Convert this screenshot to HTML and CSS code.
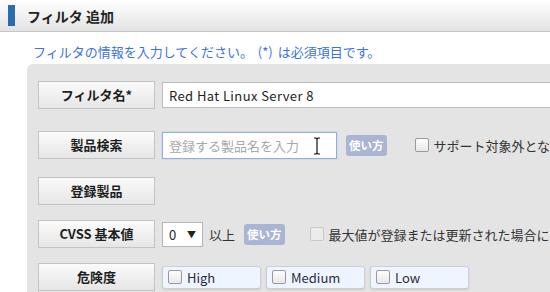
FILE: index.html
```html
<!DOCTYPE html>
<html lang="ja">
<head>
    <meta charset="UTF-8">
    <title>フィルタ 追加</title>
    <link rel="stylesheet" href="styles.css">
</head>
<body>
    <header class="page-header">
        <span class="header-mark"></span>
        <h1>フィルタ 追加</h1>
    </header>

    <p class="intro">フィルタの情報を入力してください。 (*) は必須項目です。</p>

    <div class="form-panel">
        <div class="form-row row-name">
            <div class="field-label">フィルタ名*</div>
            <input class="text-input name-input" type="text" value="Red Hat Linux Server 8">
        </div>

        <div class="form-row row-search">
            <div class="field-label">製品検索</div>
            <div class="search-box">
                <input class="text-input search-input" type="text" placeholder="登録する製品名を入力">
                <svg class="ibeam" width="8" height="18" viewBox="0 0 8 18">
                    <path d="M1 1h2l1 1 1-1h2M4 2v14M1 17h2l1-1 1 1h2" fill="none" stroke="#111" stroke-width="1.2"/>
                </svg>
            </div>
            <span class="help-btn">使い方</span>
            <label class="check-opt">
                <span class="check-box"></span>
                サポート対象外となった製品も表示
            </label>
        </div>

        <div class="form-row row-registered">
            <div class="field-label">登録製品</div>
        </div>

        <div class="form-row row-cvss">
            <div class="field-label">CVSS 基本値</div>
            <div class="select-box">
                <span>0</span>
                <span class="select-arrow">▼</span>
            </div>
            <span class="unit">以上</span>
            <span class="help-btn">使い方</span>
            <label class="check-opt cvss-check">
                <span class="check-box disabled"></span>
                最大値が登録または更新された場合にのみ通知
            </label>
        </div>

        <div class="form-row row-risk">
            <div class="field-label">危険度</div>
            <div class="risk-options">
                <label class="risk-item"><span class="check-box"></span>High</label>
                <label class="risk-item"><span class="check-box"></span>Medium</label>
                <label class="risk-item"><span class="check-box"></span>Low</label>
            </div>
        </div>
    </div>
</body>
</html>
```

FILE: styles.css
```css
:root {
    --accent-blue: #2a6cb0;
    --link-blue: #3b73e0;
    --panel-gray: #e4e4e4;
    --border-gray: #c4c4c4;
    --text-dark: #1e1e1e;
}

body {
    margin: 0;
    font-family: "Noto Sans CJK JP", "Noto Sans", sans-serif;
    font-size: 13px;
    color: var(--text-dark);
    background: #fff;
    overflow: hidden;
}

.page-header {
    height: 31px;
    display: flex;
    align-items: center;
    background: linear-gradient(#ffffff, #e3e3e3);
    border-bottom: 1px solid #c6c6c6;
}

.header-mark {
    width: 7px;
    height: 21px;
    margin-left: 8px;
    background: var(--accent-blue);
}

.page-header h1 {
    margin: 0 0 0 12px;
    font-size: 14px;
    font-weight: bold;
    color: #222;
}

.intro {
    margin: 11px 0 0 33px;
    line-height: 18px;
    font-size: 13px;
    color: var(--link-blue);
    word-spacing: 2px;
}

.form-panel {
    box-sizing: border-box;
    margin: 3px 0 0 27px;
    height: 228px;
    padding: 17px 0 0 11px;
    background: var(--panel-gray);
    border-radius: 6px 0 0 0;
    overflow: hidden;
}

.form-row {
    display: flex;
    align-items: center;
    white-space: nowrap;
}

.form-row > * {
    flex: none;
}

.row-name { margin-bottom: 22px; }
.row-search { margin-bottom: 18px; }
.row-registered { margin-bottom: 15px; }
.row-cvss { margin-bottom: 15px; }

.field-label {
    width: 115px;
    height: 26px;
    line-height: 26px;
    margin-right: 7px;
    text-align: center;
    font-weight: bold;
    font-size: 13px;
    background: linear-gradient(#fbfbfb, #e6e6e6);
    border: 1px solid var(--border-gray);
}

.text-input {
    box-sizing: border-box;
    height: 26px;
    padding: 0 6px;
    font-family: inherit;
    font-size: 13px;
    color: var(--text-dark);
    border: 1px solid #bdbdbd;
    background: #fff;
    outline: none;
}

.name-input {
    width: 420px;
    letter-spacing: 0.4px;
}

.search-box {
    position: relative;
}

.search-input {
    width: 175px;
    height: 27px;
    border: 1px solid #8daee6;
    box-shadow: 0 0 1px #8daee6;
}

.search-input::placeholder {
    color: #a8a8a8;
}

.ibeam {
    position: absolute;
    left: 151px;
    top: 5px;
}

.help-btn {
    margin-left: 9px;
    padding: 0 3px;
    height: 21px;
    line-height: 21px;
    font-size: 11.5px;
    font-weight: bold;
    color: #fff;
    background: #a9b5d3;
    border-radius: 3px;
}

.check-opt {
    display: flex;
    align-items: center;
    margin-left: 28px;
    color: #333;
}

.cvss-check {
    margin-left: 25px;
}

.check-box {
    flex: none;
    width: 12px;
    height: 12px;
    margin-right: 5px;
    border: 1px solid #9a9a9a;
    border-radius: 2px;
    background: linear-gradient(#fdfdfd, #e8e8e8);
}

.check-box.disabled {
    border-color: #c8c8c8;
    background: #ececec;
}

.select-box {
    box-sizing: border-box;
    width: 41px;
    height: 25px;
    display: flex;
    align-items: center;
    justify-content: space-between;
    padding: 0 6px;
    background: #fff;
    border: 1px solid #b5b5b5;
}

.select-arrow {
    font-size: 9px;
    color: #222;
}

.unit {
    margin-left: 6px;
    color: #333;
}

.risk-options {
    display: flex;
    gap: 5px;
}

.risk-item {
    box-sizing: border-box;
    width: 99px;
    height: 23px;
    display: flex;
    align-items: center;
    padding-left: 5px;
    background: #eef5fe;
    border: 1px solid #c9d0da;
    border-radius: 3px;
    box-shadow: 0 1px 2px rgba(0, 0, 0, 0.12);
    color: #2c2c40;
}
```
